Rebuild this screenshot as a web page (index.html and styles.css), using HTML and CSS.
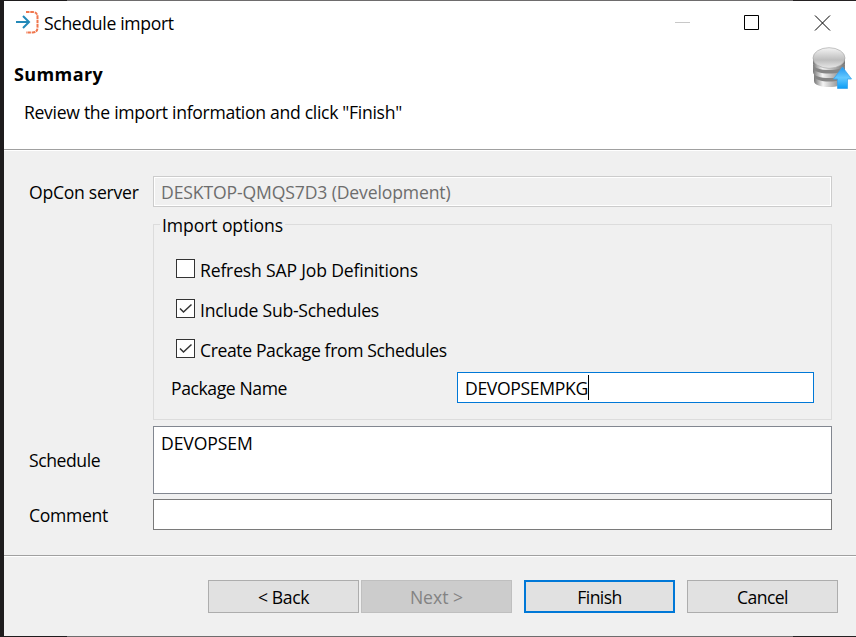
FILE: index.html
```html
<!DOCTYPE html>
<html lang="en">
<head>
<meta charset="utf-8">
<title>Schedule import</title>
<link rel="stylesheet" href="styles.css">
</head>
<body>
<div class="window">
  <header class="head">
    <div class="titlebar">
      <svg class="app-icon" width="24" height="24" viewBox="0 0 24 24" fill="none">
        <path d="M10 2h6.500q5 0 5 5v10.500q0 5-5 5H10" stroke="#f0764d" stroke-width="2" stroke-dasharray="3.500 .8"/>
        <path d="M0 12h12.500M7 6l6 6-6 6" stroke="#2389b8" stroke-width="2"/>
      </svg>
      <span class="title"><span class="t-title">Schedule import</span></span>
      <svg class="controls" width="156" height="16" viewBox="0 0 156 16" fill="none">
        <path d="M0 7.500h15" stroke="#c8c8c8"/>
        <path d="M69.500.5h14v14h-14z" stroke="#000"/>
        <path d="M140 .5l15 15M155 .5l-15 15" stroke="#000" stroke-width="1"/>
      </svg>
    </div>
    <div class="banner">
      <div>
        <h1><span class="t-summary">Summary</span></h1>
        <p><span class="t-review">Review the import information and click "Finish"</span></p>
      </div>
      <svg class="db" width="40" height="44" viewBox="0 0 40 44">
        <defs>
          <linearGradient id="side"><stop offset="0" stop-color="#777"/><stop offset=".3" stop-color="#f4f4f4"/><stop offset=".6" stop-color="#bbb"/><stop offset="1" stop-color="#777"/></linearGradient>
          <linearGradient id="lid" x2="0" y2="1"><stop offset="0" stop-color="#f4f4f4"/><stop offset=".6" stop-color="#bdbdbd"/><stop offset="1" stop-color="#e8e8e8"/></linearGradient>
          <linearGradient id="arrow" x2="0" y2="1"><stop offset="0" stop-color="#2196f0"/><stop offset=".5" stop-color="#62c8ff"/><stop offset="1" stop-color="#0b9cf5"/></linearGradient>
        </defs>
        <path d="M2 28v6c0 8 30 8 30 0v-6z" fill="url(#side)"/>
        <path d="M2 26v2.500c0 8 30 8 30 0v-2.500" fill="#858585"/>
        <path d="M1 20v5c0 8 32 8 32 0v-5z" fill="url(#side)"/>
        <path d="M1 18v2.500c0 8 32 8 32 0v-2.500" fill="#858585"/>
        <path d="M1 11v6c0 8 32 8 32 0v-6z" fill="url(#side)"/>
        <ellipse cx="17" cy="11" rx="16" ry="10.300" fill="url(#lid)" stroke="#aaa" stroke-width=".7"/>
        <path d="M30.500 20l9 12h-4v9.500h-10V32h-4z" fill="url(#arrow)" stroke="#3ba5ee" stroke-width=".8"/>
      </svg>
    </div>
  </header>

  <main class="form">
    <label class="row-label"><span class="t-server">OpCon server</span></label>
    <div class="field disabled"><span class="t-desktop">DESKTOP-QMQS7D3 (Development)</span></div>

    <section class="group">
      <div class="legend"><span class="t-options">Import options</span></div>
      <div class="check"><i class="box"></i><span class="t-refresh">Refresh SAP Job Definitions</span></div>
      <div class="check"><i class="box"><svg width="17" height="17" viewBox="0 0 17 17"><path d="M3 8.500l3.500 3.500 8-7.500" fill="none" stroke="#333" stroke-width="1.500"/></svg></i><span class="t-include">Include Sub-Schedules</span></div>
      <div class="check"><i class="box"><svg width="17" height="17" viewBox="0 0 17 17"><path d="M3 8.500l3.500 3.500 8-7.500" fill="none" stroke="#333" stroke-width="1.500"/></svg></i><span class="t-create">Create Package from Schedules</span></div>
      <div class="package">
        <label><span class="t-package">Package Name</span></label>
        <div class="field focused"><span class="t-pkg">DEVOPSEMPKG</span><i class="caret"></i></div>
      </div>
    </section>

    <label class="row-label schedule-label"><span class="t-schedule">Schedule</span></label>
    <div class="field area"><span class="t-devopsem">DEVOPSEM</span></div>

    <label class="row-label comment-label"><span class="t-comment">Comment</span></label>
    <div class="field comment"></div>
  </main>

  <footer class="actions">
    <div class="btn"><span class="t-back">&lt; Back</span></div>
    <div class="btn off"><span class="t-next">Next &gt;</span></div>
    <div class="btn primary"><span class="t-finish">Finish</span></div>
    <div class="btn cancel"><span class="t-cancel">Cancel</span></div>
  </footer>
</div>
</body>
</html>
```
FILE: styles.css
```css
* { box-sizing: border-box; }
body {
  margin: 0;
  height: 637px;
  padding: 1px 0 1px 4px;
  overflow: hidden;
  background: linear-gradient(90deg, #1e1c1d 67px, #6e6c6d 67px, #6e6c6d 793px, #242122 793px);
  font: 17.6px/24px "Open Sans", "Noto Sans", sans-serif;
  color: #000;
}
span { white-space: nowrap; }
.window { height: 635px; background: #f0f0f0; display: flex; flex-direction: column; }
.head { height: 149px; background: #fff; border-bottom: 1px solid #a0a0a0; }
.titlebar { height: 46px; display: flex; align-items: flex-start; padding: 9px 25px 0 12px; }
.title { margin: 1px auto 0 4px; }
.controls { margin-top: 5px; }
.banner { display: flex; justify-content: space-between; padding: 0 4px 0 10px; }
h1 { margin: 15px 0 0; font-size: 18px; line-height: 24px; font-weight: 700; }
p { margin: 14px 0 0 10px; }
.form {
  height: 406px;
  border-top: 1px solid #fff;
  border-bottom: 1px solid #a0a0a0;
  display: grid;
  grid-template-columns: 124px 679px;
  grid-template-rows: 31px 196px 68px 31px;
  padding: 25px 0 0 25px;
}
.row-label { padding-top: 4px; }
.field { border: 1px solid #7a7a7a; background: #fff; height: 31px; padding: 3px 7px; display: flex; }
.disabled { background: #f0f0f0; border-color: #ccc; box-shadow: inset 0 0 0 1px #fff; color: #6d6d6d; }
.group { grid-column: 2; margin-top: 17px; height: 196px; border: 1px solid #dcdcdc; }
.legend { width: 125px; height: 24px; margin: -12px 0 0 6px; padding-left: 2px; background: #f0f0f0; }
.check { display: flex; height: 24px; margin: 16px 0 0 22px; gap: 5px; }
.check span { margin-top: -1px; }
.legend + .check { margin-top: 22px; }
.box { width: 19px; height: 19px; border: 1px solid #333; background: #fff; }
.box svg { display: block; }
.package { display: grid; grid-template-columns: 286px 357px; margin: 9px 0 0 17px; }
.package label { padding-top: 4px; }
.package .focused { border: 1px solid #0078d7; }
.caret { width: 1px; height: 25px; margin-top: -1px; background: #000; }
.area { height: 68px; margin-top: 23px; border-color: #828790; padding-top: 4px; }
.schedule-label { padding-top: 45px; }
.comment { margin-top: 28px; }
.comment-label { padding-top: 32px; }
.actions { height: 80px; border-top: 1px solid #fff; display: flex; gap: 2px; padding: 23px 0 0 204px; }
.btn { width: 151px; height: 33px; background: #e1e1e1; border: 1px solid #adadad; display: flex; justify-content: center; align-items: center; }
.off { background: #ccc; border-color: #bfbfbf; color: #838383; }
.primary { border: 2px solid #0078d7; margin-left: 10px; }
.cancel { margin-left: 10px; }

/* Per-label tracking */
.t-title { letter-spacing: -.33px; }
.t-summary { letter-spacing: .4px; }
.t-review { letter-spacing: -.31px; }
.t-server { letter-spacing: -.27px; }
.t-desktop { letter-spacing: -.14px; }
.t-options { letter-spacing: -.1px; }
.t-refresh { letter-spacing: -.18px; }
.t-include { letter-spacing: -.26px; }
.t-create { letter-spacing: -.39px; }
.t-package { letter-spacing: -.42px; }
.t-pkg { letter-spacing: -.35px; }
.t-devopsem { letter-spacing: -.1px; }
.t-schedule { letter-spacing: -.44px; }
.t-comment { letter-spacing: -.3px; }
.t-back { letter-spacing: -.4px; }
.t-finish { letter-spacing: -.6px; }
.t-cancel { letter-spacing: -.6px; }
```
